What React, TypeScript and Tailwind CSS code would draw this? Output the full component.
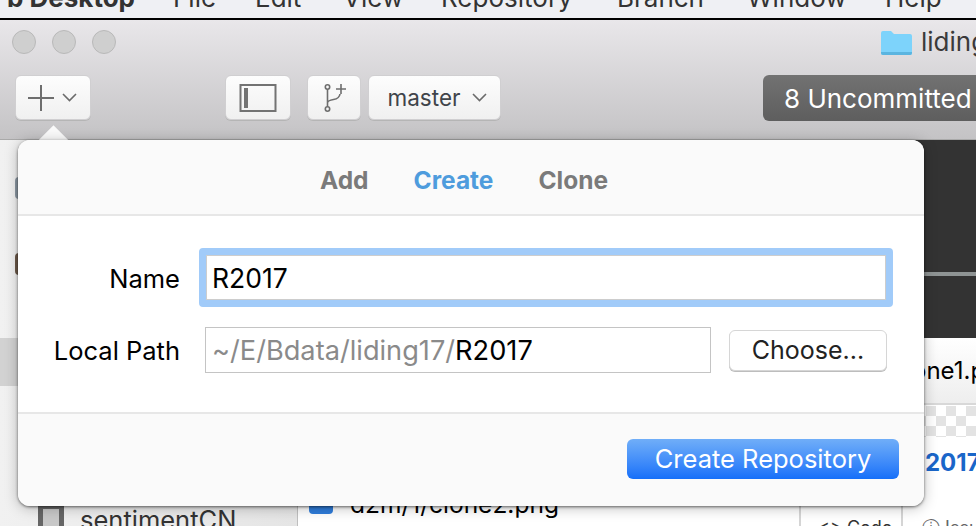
import React from "react";

function ToolbarButton({ className, children }: { className: string; children: React.ReactNode }) {
  return (
    <div
      className={`flex h-[45px] items-center justify-center rounded-[6px] border border-[#d0cfd1] bg-gradient-to-b from-[#fdfdfd] to-[#f0f0f0] shadow-[0_1px_0_#b5b5b5] ${className}`}
    >
      {children}
    </div>
  );
}

function Chevron() {
  return (
    <svg width="15" height="9" viewBox="0 0 15 9" fill="none" stroke="#6b6b6b" strokeWidth="1.6">
      <path d="M1 1l6.5 6.5L14 1" />
    </svg>
  );
}

export default function App() {
  return (
    <div className="relative h-[526px] w-[976px] overflow-hidden bg-white font-['Inter',sans-serif]">
      {/* Menu bar */}
      <div className="flex h-[20px] items-end overflow-hidden border-b-2 border-black bg-[#eff0f4] pb-[5px] text-[26px] leading-[30px] text-[#333] whitespace-nowrap">
        <b className="w-[173px] pr-[38px] text-right">b Desktop</b>
        <span className="w-[82px]">File</span>
        <span className="w-[88px]">Edit</span>
        <span className="w-[98px]">View</span>
        <span className="w-[176px]">Repository</span>
        <span className="w-[130px]">Branch</span>
        <span className="w-[138px]">Window</span>
        <span>Help</span>
      </div>

      {/* Title + toolbar */}
      <div className="h-[120px] border-b border-[#a9a9a9] bg-gradient-to-b from-[#e9e7ea] to-[#c4c3c5]">
        <div className="flex h-[44px] items-center gap-[16px] pl-[12px]">
          <div className="h-6 w-6 rounded-full border border-[#b9b9b9] bg-[#cfcfcf]" />
          <div className="h-6 w-6 rounded-full border border-[#b9b9b9] bg-[#cfcfcf]" />
          <div className="h-6 w-6 rounded-full border border-[#b9b9b9] bg-[#cfcfcf]" />
          <div className="ml-auto flex items-center gap-[9px]">
            <svg width="31" height="25" viewBox="0 0 31 25">
              <path d="M0 3a2 2 0 0 1 2-2h8l3 3h16a2 2 0 0 1 2 2v17a2 2 0 0 1-2 2H2a2 2 0 0 1-2-2z" fill="#7dd3fb" />
              <path d="M0 22h31v1a2 2 0 0 1-2 2H2a2 2 0 0 1-2-2z" fill="#5bb5e0" />
            </svg>
            <span className="w-[55px] overflow-hidden text-[26px] leading-[30px] text-[#3a3a3a]">liding</span>
          </div>
        </div>
        <div className="flex items-start pl-[15px] pt-[11px]">
          <ToolbarButton className="w-[76px] gap-[8px] pr-[1px]">
            <svg width="26" height="26" viewBox="0 0 26 26" fill="#6e6e6e">
              <rect x="0" y="12" width="26" height="2" />
              <rect x="12" y="0" width="2" height="26" />
            </svg>
            <Chevron />
          </ToolbarButton>
          <ToolbarButton className="ml-[134px] w-[66px]">
            <svg width="38" height="28" viewBox="0 0 38 28" fill="none">
              <rect x="1.5" y="1" width="35" height="26" stroke="#737373" strokeWidth="2" />
              <rect x="5" y="4" width="4" height="20" fill="#737373" />
            </svg>
          </ToolbarButton>
          <ToolbarButton className="ml-[16px] w-[54px]">
            <svg width="24" height="30" viewBox="0 0 24 30" fill="none" stroke="#6e6e6e" strokeWidth="1.6">
              <circle cx="5.5" cy="4" r="2.2" />
              <circle cx="5.5" cy="26" r="2.2" />
              <path d="M5.5 6.2v17.6M5.5 20c0-2.5 3-3 6-3.5s6-1.500 6.500-5.500" />
              <path d="M14 6h10M19 1v10" />
            </svg>
          </ToolbarButton>
          <ToolbarButton className="ml-[7px] w-[133px] gap-[12px] pl-[6px] text-[22.5px] text-[#3f444a]">
            <span>master</span>
            <Chevron />
          </ToolbarButton>
          <div className="ml-auto flex h-[46px] w-[213px] items-center rounded-l-[6px] bg-gradient-to-b from-[#727272] to-[#5e5e5e] pl-[21px] text-[26px] whitespace-nowrap text-white">
            8 Uncommitted
          </div>
        </div>
      </div>

      {/* Content peeking out around the sheet */}
      <div className="flex h-[386px]">
        <div className="relative w-[298px] border-r border-[#bfbfbf] bg-gradient-to-r from-[#f1f1f1] to-[#e5e5e5]">
          <div className="absolute top-[37px] left-[15px] h-[22px] w-[8px] rounded-full bg-[#8c98a3]" />
          <div className="absolute top-[113px] left-[15px] h-[22px] w-[8px] rounded-full bg-[#6d5a4a]" />
          <div className="absolute top-[198px] left-0 h-[48px] w-full bg-[#d2d2d2]" />
          <div className="absolute top-[364px] left-[38px] h-[30px] w-[26px] border-[5px] border-[#666] bg-[#c8c8c8]" />
          <span className="absolute top-[365px] left-[80px] text-[25.5px] leading-[30px] text-[#333]">sentimentCN</span>
        </div>
        <div className="relative flex-1 overflow-hidden bg-white">
          <div className="absolute top-[354px] left-[11px] h-[20px] w-[24px] rounded-[4px] bg-[#2f7ddb]" />
          <span className="absolute top-[349px] left-[52px] text-[24.500px] leading-[30px] text-black">d2m/1/clone2.png</span>
          <div className="absolute top-0 right-0 h-[198px] w-[100px] bg-[#333]" />
          <div className="absolute top-[132px] right-0 h-[4px] w-[100px] bg-[#8f9494]" />
          <div className="absolute top-[198px] right-0 h-[67px] w-[100px] border-b-2 border-[#d8d8d8] bg-gradient-to-b from-white to-[#eeeeee]" />
          <span className="absolute top-[216px] left-[614px] text-[24px] leading-[30px] whitespace-nowrap text-black">one1.png</span>
          <div className="absolute top-[266px] right-0 h-[31px] w-[100px] bg-[repeating-conic-gradient(#e3e3e3_0_25%,#fff_0_50%)] bg-[length:20px_20px]" />
          <span className="absolute top-[308px] left-[627px] text-[24px] leading-[30px] font-bold text-[#1a66c9]">2017</span>
          <div className="absolute top-[366px] left-[501px] h-[20px] w-[104px] border-x-2 border-[#d5d5d5]" />
          <span className="absolute top-[376px] left-[520px] text-[18px] leading-[24px] whitespace-nowrap text-[#333]">&lt;&gt; Code</span>
          <span className="absolute top-[376px] left-[624px] text-[18px] leading-[24px] whitespace-nowrap text-[#666]">ⓘ Issues</span>
        </div>
      </div>

      {/* Popover arrow */}
      <div className="absolute top-[130px] left-[42px] h-[23px] w-[23px] rotate-45 bg-[#fafafa]" />

      {/* Create repository sheet */}
      <div className="absolute top-[140px] left-[18px] flex h-[366px] w-[906px] flex-col overflow-hidden rounded-[12px] bg-white shadow-[0_1px_3px_rgba(0,0,0,.55),0_2px_14px_rgba(0,0,0,.25)]">
        <div className="flex h-[76px] items-center justify-center gap-[45px] border-b-2 border-[#e7e7e7] bg-[#fafafa] pt-[6px] pr-[14px] text-[24.5px] font-bold text-[#7a7a7a]">
          <span>Add</span>
          <span className="text-[#4e9cdd]">Create</span>
          <span>Clone</span>
        </div>
        <div className="flex flex-1 flex-col gap-[20px] bg-white pt-[32px] text-black">
          <div className="flex items-center">
            <label className="w-[162px] pt-[3px] text-right text-[25.5px]">Name</label>
            <div className="ml-[19px] flex h-[59px] w-[694px] items-center rounded-[4px] border-[7px] border-[#a1cbf9] bg-white">
              <div className="flex h-full w-full items-center border border-[#cdcdcd] pt-[3px] pl-[5px] text-[26.5px]">R2017</div>
            </div>
          </div>
          <div className="flex items-center">
            <label className="w-[162px] pt-[2px] text-right text-[25.5px]">Local Path</label>
            <div className="ml-[25px] flex h-[46px] w-[506px] items-center border border-[#c4c4c4] pt-[2px] pl-[6px] text-[27.2px]">
              <span className="text-[#8a8a8a]">~/E/Bdata/liding17/</span>R2017
            </div>
            <div className="ml-[18px] flex h-[41px] w-[158px] items-center justify-center rounded-[6px] border border-[#d6d6d6] bg-white pt-[2px] text-[25px] text-[#222] shadow-[0_1px_0_#bdbdbd]">
              Choose...
            </div>
          </div>
        </div>
        <div className="flex h-[94px] items-start justify-end border-t-2 border-[#e7e7e7] bg-[#fafafa] pt-[25px] pr-[25px]">
          <div className="flex h-[40px] w-[272px] items-center justify-center rounded-[6px] bg-gradient-to-b from-[#70aef8] to-[#146ff9] text-[25.5px] text-white">
            Create Repository
          </div>
        </div>
      </div>
    </div>
  );
}
